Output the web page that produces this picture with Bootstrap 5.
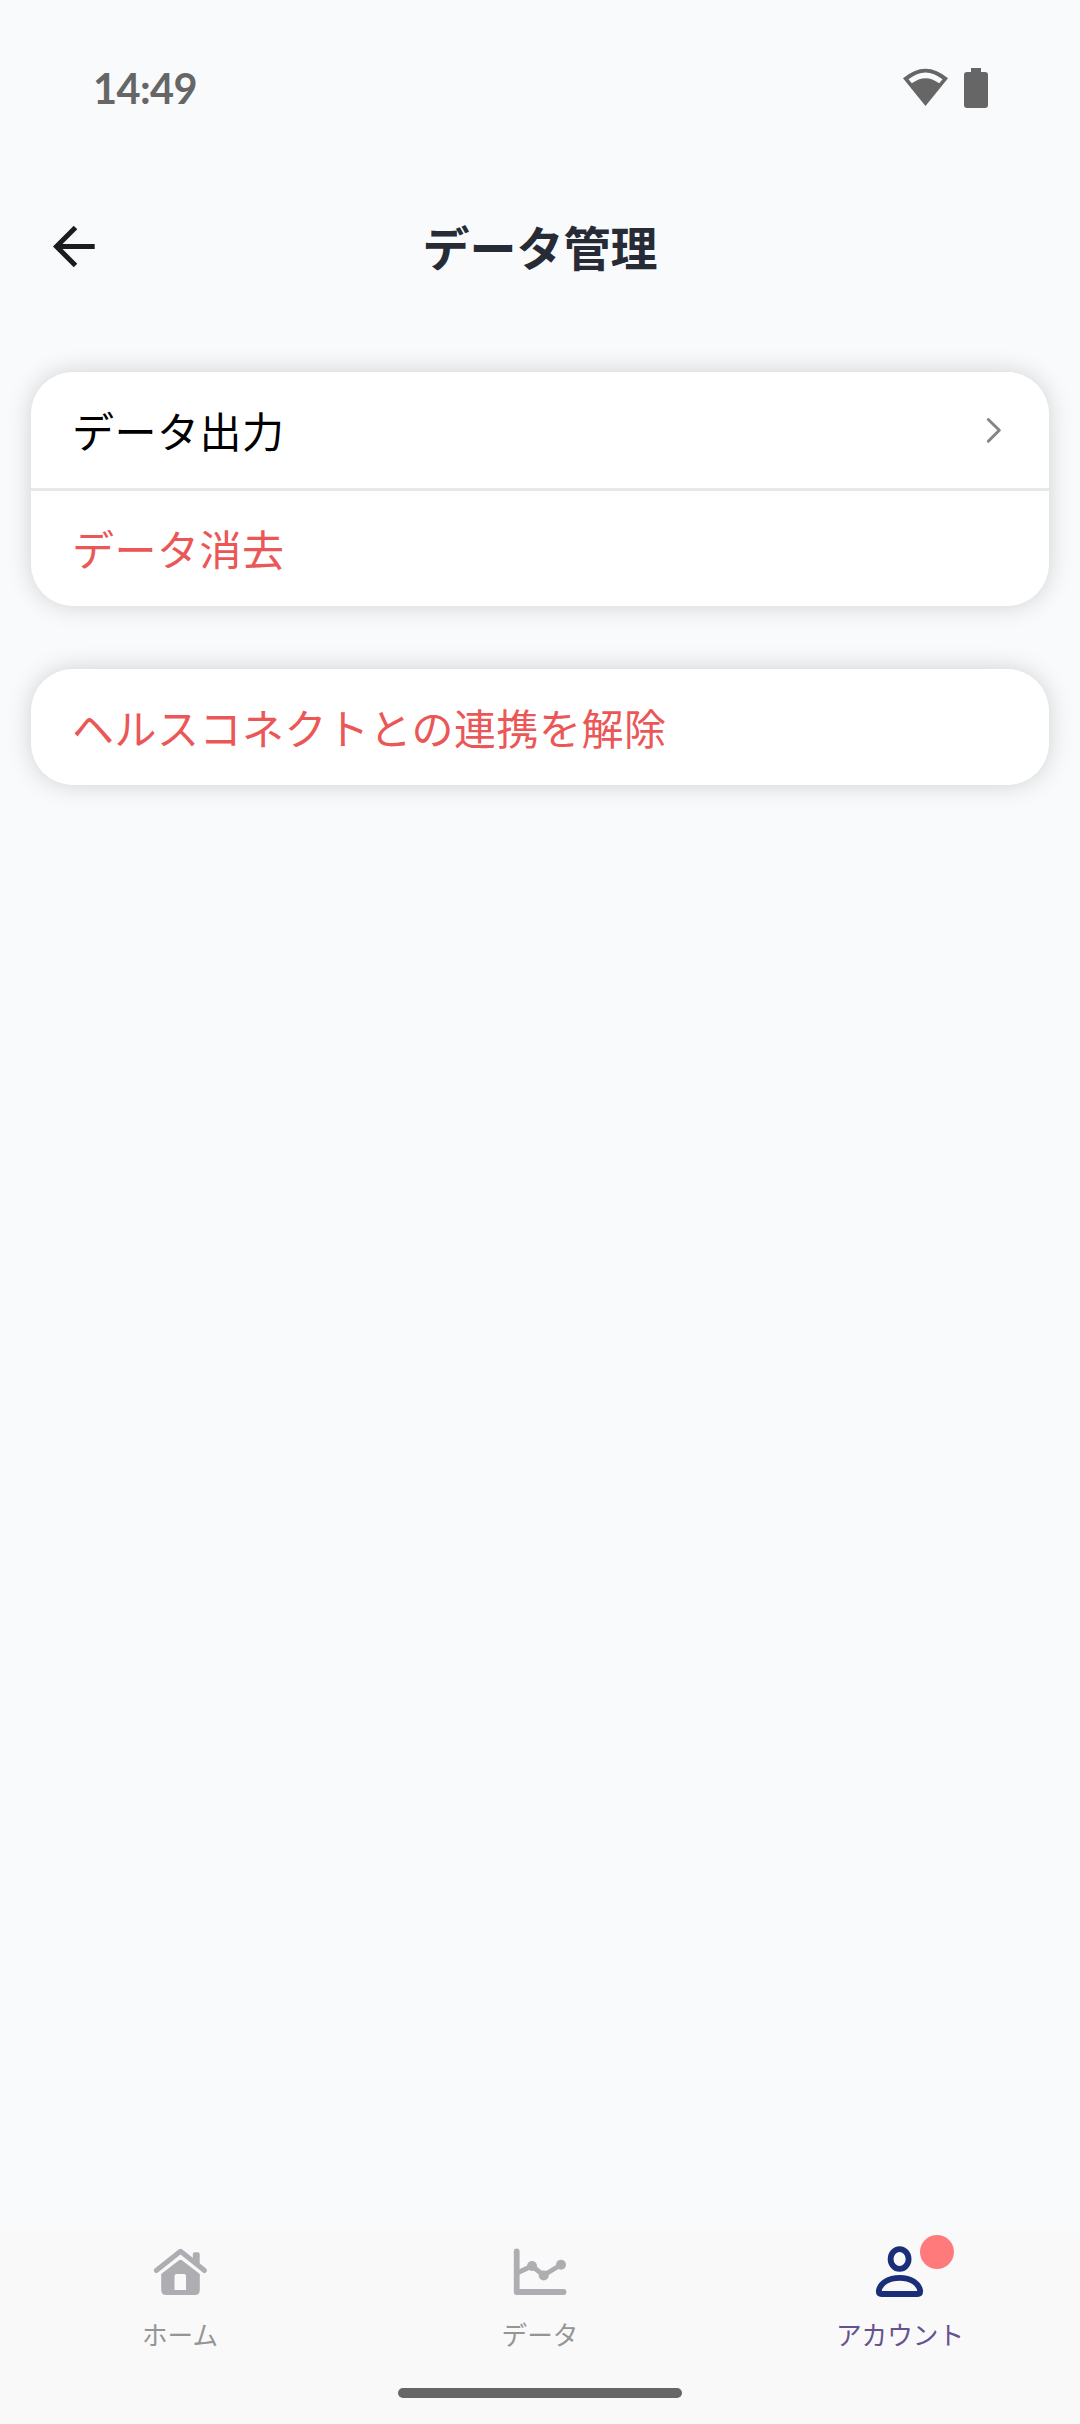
<!DOCTYPE html>
<html lang="ja">
<head>
<meta charset="utf-8">
<meta name="viewport" content="width=device-width, initial-scale=1">
<title>データ管理</title>
<link href="https://cdn.jsdelivr.net/npm/bootstrap@5.3.0/dist/css/bootstrap.min.css" rel="stylesheet">
<style>
  body { background: #f9fafc; font-family: "Noto Sans CJK JP", sans-serif; color: #000; }
  svg { display: block; flex: none; }
  .screen { height: 2424px; overflow: hidden; }
  .status-bar { height: 176px; padding: 0 91px 0 93px; color: #656665; }
  .clock { font: 700 41.5px/1 Lato, sans-serif; letter-spacing: -.6px; padding-top: 2px; }
  .top-bar { height: 142px; padding: 0 52px 3px; }
  .top-title { color: #272b35; font-size: 47px; font-weight: 700; line-height: 70px; }
  .content { padding: 54px 31px 0 31px; gap: 63px; }
  .panel { background: #fff; border-radius: 42px; overflow: hidden; box-shadow: 0 0 24px rgba(0,0,0,.17); }
  .panel .list-group-item { height: 116px; padding: 0 46px 1px 41px; border-width: 0; background: #fff; color: #000; font-size: 42px; letter-spacing: .5px; line-height: 60px; }
  .panel .list-group-item + .list-group-item { border-top: 3px solid #e7e7e8; height: 118px; }
  .panel .list-group-item.danger-item { color: #eb5757; }
  .tab-bar { height: 194px; background: #f9f9f9; color: #959595; }
  .tab-bar .nav-link { padding: 14px 0 0; color: #959595; font-size: 25.6px; line-height: 38px; gap: 17px; }
  .tab-bar .nav-link.active { color: #66528f; }
  .notice-dot { width: 34px; height: 34px; left: 50px; top: -9px; background: #ff7b7b; }
  .home-pill { width: 284px; height: 10px; background: #666; margin-bottom: 26px; }
</style>
<script src="https://cdn.jsdelivr.net/npm/bootstrap@5.3.0/dist/js/bootstrap.bundle.min.js"></script>
</head>
<body>
<div class="screen d-flex flex-column">
  <div class="status-bar d-flex align-items-center justify-content-between">
    <span class="clock">14:49</span>
    <svg width="86" height="40" viewBox="903 68 86 40" fill="currentColor">
      <path fill-rule="evenodd" d="M903 78.3Q925.500 59 948 78.300L925.500 106ZM908.500 79.300L911.800 83.300Q925.500 73 939.200 83.300L942.500 79.300Q925.500 65.500 908.500 79.300Z"/>
      <path d="M971 68h10v4h4q3 0 3 3v30q0 3-3 3h-18q-3 0-3-3v-30q0-3 3-3h4z"/>
    </svg>
  </div>

  <header class="top-bar row gx-0 align-items-center">
    <div class="col-3">
      <svg width="44" height="44" viewBox="52 224 44 44" fill="none" stroke="#1c1b20" stroke-width="5">
        <path d="M75.500 227.500L56.500 246.500L75.500 265.500M57 246.500H94.700"/>
      </svg>
    </div>
    <h1 class="top-title col-6 text-center mb-0">データ管理</h1>
  </header>

  <main class="content d-flex flex-column flex-grow-1">
    <div class="list-group panel">
      <a href="#" class="list-group-item d-flex align-items-center justify-content-between">データ出力
        <svg width="18" height="28" viewBox="985 416 18 28" fill="none" stroke="#858585" stroke-width="3" stroke-linecap="round" stroke-linejoin="round"><path d="M988.300 419.500L999.300 430.300L988.300 441.200"/></svg>
      </a>
      <a href="#" class="list-group-item danger-item d-flex align-items-center">データ消去</a>
    </div>
    <div class="list-group panel">
      <a href="#" class="list-group-item danger-item d-flex align-items-center">ヘルスコネクトとの連携を解除</a>
    </div>
  </main>

  <footer class="tab-bar d-flex flex-column justify-content-between align-items-center">
    <nav class="nav nav-fill w-100 row gx-0">
      <a href="#" class="nav-link col-4 d-flex flex-column align-items-center">
        <svg width="60" height="54" viewBox="150 2244 60 54" fill="#aeaeb2">
          <path d="M156.300 2270.500L180.500 2251.300L204.500 2270.500" fill="none" stroke="#aeaeb2" stroke-width="5" stroke-linecap="round" stroke-linejoin="round"/>
          <path d="M192.800 2261v-7q0-1.800 1.800-1.800h3.300q1.800 0 1.800 1.800v13z"/>
          <path fill-rule="evenodd" d="M161.200 2274L179 2260.300q1.500-1.200 3 0L199.800 2274V2290q0 5-5 5h-28.600q-5 0-5-5zM176.500 2274q-2 0-2 2v14h11.500v-14q0-2-2-2z"/>
        </svg>
        <span>ホーム</span>
      </a>
      <a href="#" class="nav-link col-4 d-flex flex-column align-items-center">
        <svg width="60" height="54" viewBox="510 2244 60 54" fill="#aeaeb2" stroke="#aeaeb2" stroke-linecap="round" stroke-linejoin="round">
          <path d="M516.700 2251.500V2292H563.500" fill="none" stroke-width="5.800"/>
          <path d="M518 2272.500L532 2266L543.700 2275.300L561 2264.700" fill="none" stroke-width="4.800"/>
          <g stroke="none"><circle cx="532" cy="2266" r="5"/><circle cx="543.700" cy="2275.500" r="5"/><circle cx="561" cy="2264.700" r="5"/></g>
        </svg>
        <span>データ</span>
      </a>
      <a href="#" class="nav-link active col-4 d-flex flex-column align-items-center">
        <span class="position-relative">
          <svg width="60" height="54" viewBox="870 2244 60 54" fill="none" stroke="#1b2f78" stroke-width="5.800">
            <ellipse cx="899.600" cy="2259" rx="9" ry="9.900"/>
            <path d="M881.500 2294H917.500Q920.200 2294 920.200 2291C919 2283 910.500 2277.800 899.600 2277.800S880 2283 878.800 2291Q878.800 2294 881.500 2294Z" stroke-linejoin="round"/>
          </svg>
          <span class="notice-dot position-absolute rounded-circle"></span>
        </span>
        <span>アカウント</span>
      </a>
    </nav>
    <div class="home-pill rounded-pill"></div>
  </footer>
</div>
</body>
</html>
